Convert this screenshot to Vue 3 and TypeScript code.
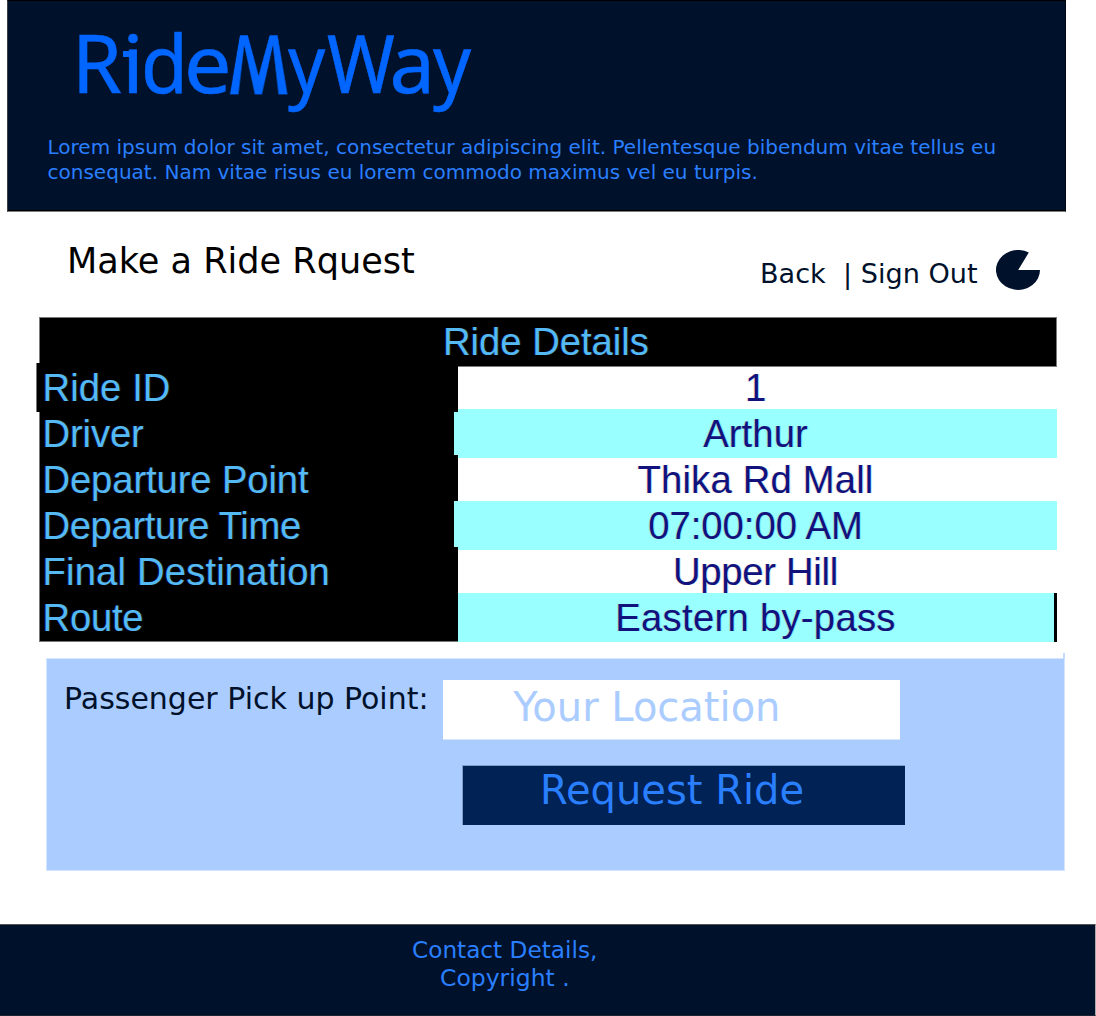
<script setup lang="ts">
interface Letter { ch: string; width: number; scale: number; kind?: string }
interface Row { label: string; value: string; labelGap: number; valueGap: number; jut?: string }

const logo: Letter[] = [
  { ch: 'R', width: 50.3, scale: 0.99 },
  { ch: 'i', width: 19, scale: 1.05, kind: 'foot' },
  { ch: 'd', width: 43.5, scale: 0.94 },
  { ch: 'e', width: 37.5, scale: 1.04 },
  { ch: 'M', width: 66.2, scale: 1, kind: 'splayed' },
  { ch: 'y', width: 39, scale: 0.9 },
  { ch: 'W', width: 62.6, scale: 0.9 },
  { ch: 'a', width: 43.4, scale: 1 },
  { ch: 'y', width: 40, scale: 0.92 },
]

const links = 'Back  | Sign Out'

const rows: Row[] = [
  { label: 'Ride ID', value: '1', labelGap: 0.1, valueGap: 0, jut: 'jut-label' },
  { label: 'Driver', value: 'Arthur', labelGap: -0.1, valueGap: 0.1, jut: 'jut-value' },
  { label: 'Departure Point', value: 'Thika Rd Mall', labelGap: -0.1, valueGap: 0.2 },
  { label: 'Departure Time', value: '07:00:00 AM', labelGap: -0.35, valueGap: 0, jut: 'jut-value' },
  { label: 'Final Destination', value: 'Upper Hill', labelGap: 0.18, valueGap: -0.25 },
  { label: 'Route', value: 'Eastern by-pass', labelGap: -0.2, valueGap: 0.3, jut: 'jut-end' },
]
</script>

<template>
  <div class="page">
    <header class="banner">
      <h1 class="logo"><span
        v-for="(l, i) in logo" :key="i" class="letter" :class="l.kind"
        :style="{ width: l.width + 'px', '--sx': l.scale }"
      ><span class="glyph">{{ l.ch }}</span></span></h1>
      <p class="intro">Lorem ipsum dolor sit amet, consectetur adipiscing elit. Pellentesque bibendum vitae tellus eu<br>consequat. Nam vitae risus eu lorem commodo maximus vel eu turpis.</p>
    </header>

    <section class="title-bar">
      <h2>Make a Ride Rquest</h2>
      <nav>{{ links }}</nav>
      <svg class="pie" width="46" height="42" viewBox="0 0 46 42">
        <path d="M23.2 21 H45 A22 20 0 1 1 33.8 3.5 Z" fill="#00112b" />
      </svg>
    </section>

    <section class="details">
      <div class="caption">Ride Details</div>
      <div v-for="(r, i) in rows" :key="r.label" class="row" :class="[{ tinted: i % 2 === 1 }, r.jut]">
        <div class="label" :style="{ letterSpacing: r.labelGap + 'px' }">{{ r.label }}</div>
        <div class="value" :style="{ letterSpacing: r.valueGap + 'px' }">{{ r.value }}</div>
      </div>
    </section>

    <form class="panel" @submit.prevent>
      <div class="field">
        <label>Passenger Pick up Point:</label>
        <div class="input">Your Location</div>
      </div>
      <button class="submit" type="submit">Request Ride</button>
    </form>

    <footer class="footer">
      <div class="contact">Contact Details,</div>
      <div class="copyright">Copyright .</div>
    </footer>
  </div>
</template>

<style>
body { background: #fff; }
</style>

<style scoped>
.page {
  width: 1096px; height: 1016px; overflow: hidden;
  display: flex; flex-direction: column;
  font-family: "DejaVu Sans", sans-serif; color: #00112b;
}
h1, h2, p { margin: 0; font-weight: 400; }

.banner {
  box-sizing: border-box; width: 1059px; height: 212px; margin-left: 7px; padding: 5.6px 0 0 40px;
  background: #00112b; border: 1px solid #000; border-left-color: #3a3f48; border-bottom-color: #7c7c7c;
  border-right-color: #00060f; box-shadow: inset 0 -1px #000;
}
.logo {
  height: 110px; padding-left: 23.5px; display: flex;
  font: 400 81px/110px "Noto Sans", sans-serif; color: #06f;
  -webkit-text-stroke: 0.6px #06f;
}
.letter { position: relative; flex: none; height: 110px; }
.glyph { display: inline-block; transform: scaleX(var(--sx)); transform-origin: 0 86px; }
.splayed .glyph {
  transform-origin: 36.7px 86.4px;
  transform: matrix3d(0.955, 0, 0, 0, 0, 1.5, 0, -0.0088, 0, 0, 1, 0, 0, 0, 0, 1);
  -webkit-text-stroke-width: 2px;
}
.foot::before {
  content: ""; position: absolute; left: 1px; top: 44px; width: 8px; height: 6px; background: #06f;
}
.intro { margin-top: 18px; margin-left: -0.5px; font-size: 20.03px; line-height: 25px; color: #2a7fff; white-space: nowrap; }

.title-bar { height: 105px; display: flex; align-items: flex-start; }
.title-bar h2 { width: 693px; margin: 28.5px 0 0 67px; font-size: 35.1px; line-height: 40px; color: #000; }
.title-bar nav { width: 235px; margin-top: 47.3px; font-size: 27.1px; line-height: 30px; white-space: pre; }
.pie { margin-top: 37px; }

.details {
  width: 1018px; margin-left: 39px;
  font-family: "Liberation Sans", Arial, sans-serif; font-size: 38.2px;
}
.caption {
  box-sizing: border-box; height: 50px; line-height: 48px; padding-left: 403px;
  background: #000; border: 1px solid #7a7a7a; color: #55b9f3; letter-spacing: 0;
  text-shadow: -1px 0 rgba(0, 70, 255, 0.35), 1px 0 rgba(150, 100, 0, 0.25);
}
.row { position: relative; display: flex; height: 43px; line-height: 43px; }
.row:nth-child(2) { height: 42px; line-height: 42px; }
.row.tinted { height: 49px; line-height: 49px; }
.label {
  position: relative; box-sizing: border-box; width: 419px; padding-left: 2.5px; background: #000; color: #55b9f3;
  border-left: 1px solid #777; white-space: nowrap;
  text-shadow: -1px 0 rgba(0, 70, 255, 0.35), 1px 0 rgba(150, 100, 0, 0.25);
}
.value {
  flex: 1; text-align: center; color: #12127c; white-space: nowrap; padding-right: 4px;
  text-shadow: -1px 0 rgba(255, 130, 40, 0.22), 1px 0 rgba(0, 150, 255, 0.25);
}
.tinted .value { background: #9ff; }
/* The label column stays solid black where it meets the caption. */
.jut-label .label { border-left-color: #000; }
.jut-label .label::before {
  content: ""; position: absolute; left: 0; top: -4px; width: 418px; height: 4px; background: #000;
}
.jut-label::before {
  content: ""; position: absolute; left: -3px; top: -4px; width: 4px; height: 49px; z-index: 1;
  box-sizing: border-box; background: #000; border-left: 1px solid #777;
}
.jut-value::before {
  content: ""; position: absolute; z-index: 1; left: 415px; top: 3px; width: 4px; height: 43px; background: #9ff;
}
.jut-value:nth-child(5)::before { top: 0; height: 46px; }
.jut-end::after {
  content: ""; position: absolute; right: 0; top: 0; width: 3px; height: 49px; background: #000;
}
.row:last-child .label { border-bottom: 1px solid #777; }

.panel {
  position: relative; box-sizing: border-box; width: 1019px; height: 213px; margin: 16px 0 0 46px; padding-top: 21px;
  background: #acf; border: 1px solid #d5e5ff;
}
.panel::before {
  content: ""; position: absolute; right: -1px; top: -6px; width: 2px; height: 6px; background: #c4dbff;
}
.field { display: flex; height: 60px; }
.field label { width: 379px; padding-left: 17px; font-size: 30px; line-height: 38px; white-space: nowrap; }
.input {
  box-sizing: border-box; width: 457px; height: 60px; padding-left: 70.2px; background: #fff;
  border-bottom: 1px solid #d5e5ff; font-size: 40px; line-height: 54px; color: #acf;
}
.submit {
  display: block; box-sizing: border-box; width: 443px; height: 60px; margin: 25px 0 0 415px; padding: 0 0 11px 77px;
  border: solid #7f9cc9; border-width: 1px 0 0 1px; border-radius: 0; background: #025;
  font: 40px/48px "DejaVu Sans", sans-serif; color: #2a7fff; text-align: left;
}

.footer {
  box-sizing: border-box; height: 92px; margin-top: 53px; padding-top: 11px; background: #00112b;
  border: solid #555; border-width: 1px 1px 1px 0; border-right-color: #aaa; border-bottom-color: #1b2433;
  color: #2a7fff; line-height: 28px;
}
.contact { padding-left: 412px; font-size: 23.2px; }
.copyright { padding-left: 440px; font-size: 23.5px; }
</style>
